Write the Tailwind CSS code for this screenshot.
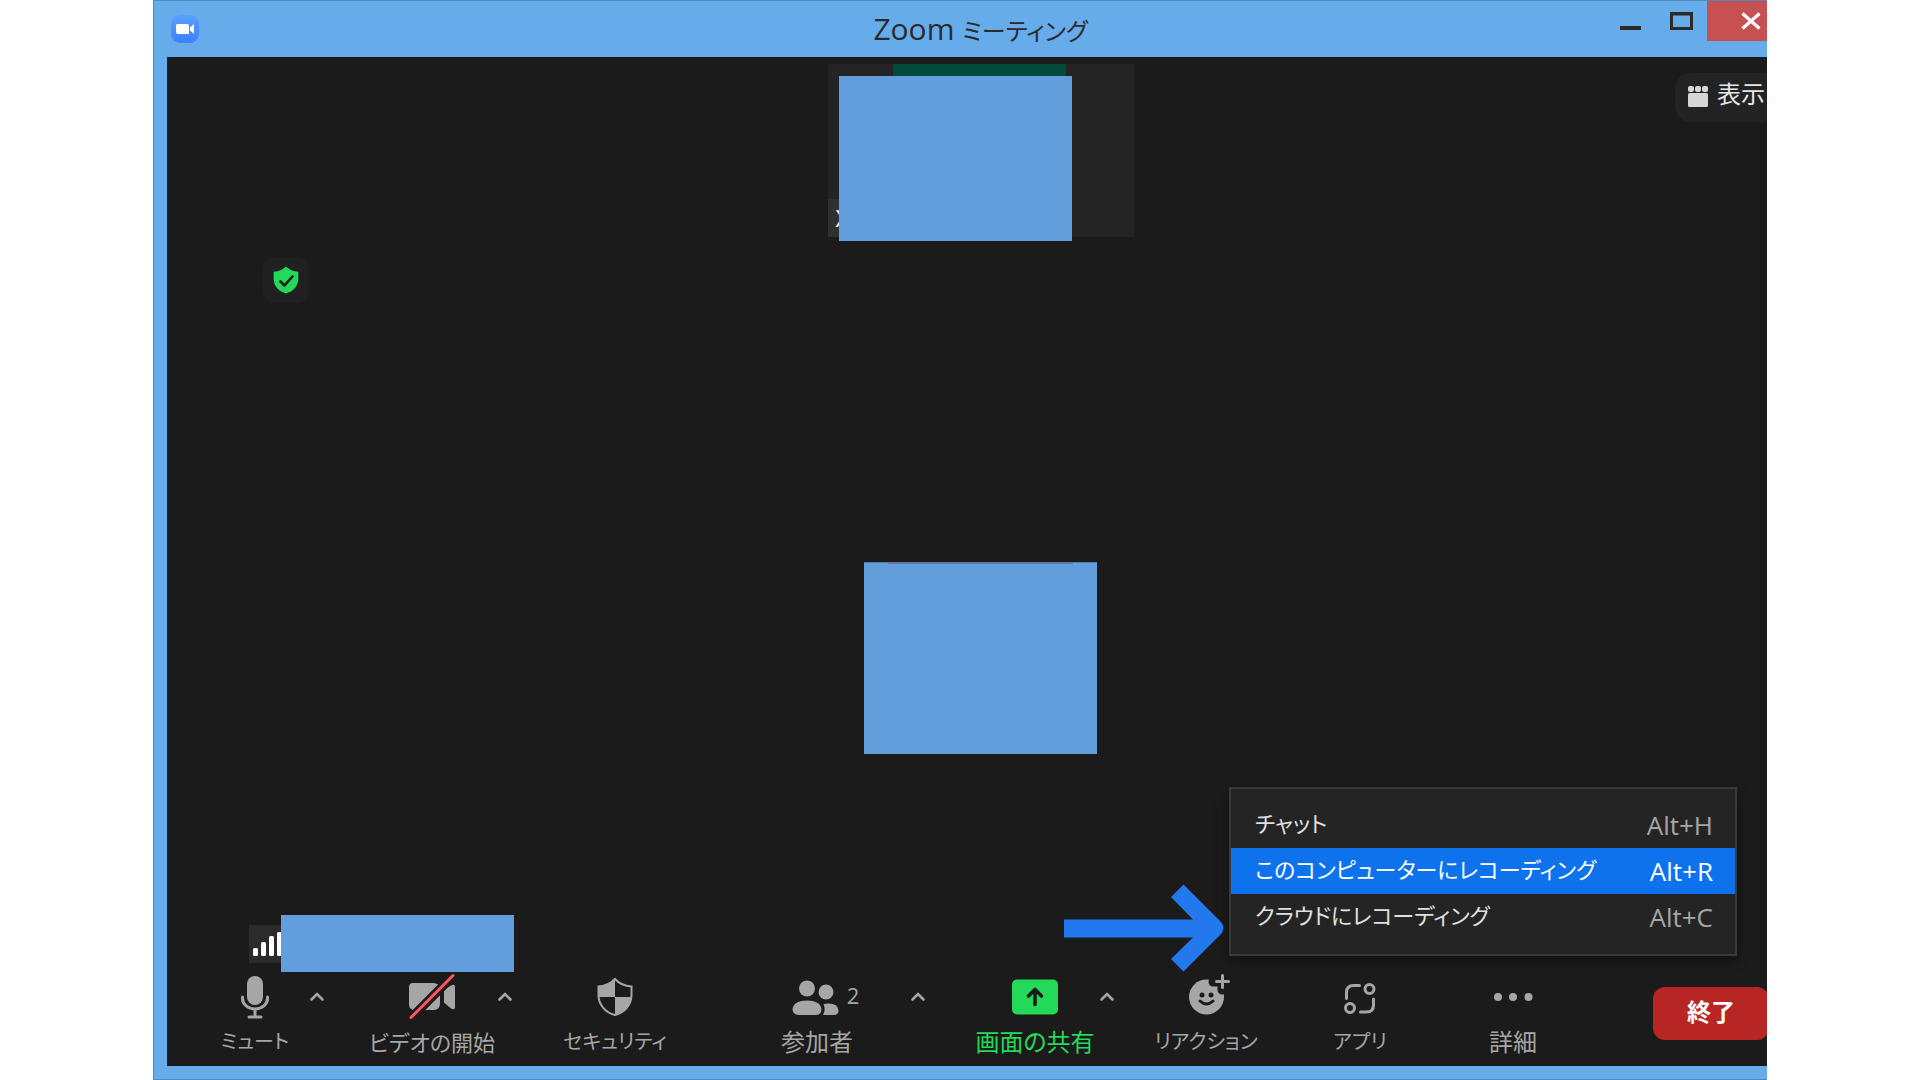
<!DOCTYPE html>
<html lang="ja">
<head>
<meta charset="utf-8">
<title>Zoom ミーティング</title>
<script src="https://cdn.jsdelivr.net/npm/@tailwindcss/browser@4"></script>
</head>
<body class="bg-white font-['Open_Sans','Noto_Sans_CJK_JP',sans-serif] [font-feature-settings:'palt']">
<div class="min-h-screen flex px-[153px]">
<div class="flex-1 flex overflow-hidden">
<div class="w-[calc(100%+40px)] shrink-0 flex flex-col bg-[#67acea] border-l border-t border-b border-[#5089c0]">

  <header class="h-14 grid grid-cols-[1fr_auto_1fr] items-center px-[13px]">
    <svg class="w-7 h-7 ml-1" viewBox="0 0 28 28" aria-hidden="true">
      <defs><linearGradient id="lg" x1="0" y1="0" x2="0" y2="1"><stop offset="0" stop-color="#5a9fff"/><stop offset="1" stop-color="#3b82fb"/></linearGradient></defs>
      <rect width="28" height="28" rx="9" fill="url(#lg)"/>
      <path d="M6 9h10q2 0 2 2v8H7q-2 0-2-2v-7zM19 12.500l4-3.500v10l-4-3.500z" fill="#fff"/>
    </svg>
    <h1 class="text-3xl leading-10 text-[#2b2b2b] whitespace-nowrap">Zoom <span class="text-2xl">ミーティング</span></h1>
    <div class="flex justify-end self-start">
      <button class="w-[52px] h-10 grid place-items-center" aria-label="最小化"><svg class="w-6 h-8" viewBox="0 0 24 32"><rect x="1" y="21" width="21" height="4" fill="#2b2b2b"/></svg></button>
      <button class="w-[50px] h-10 grid place-items-center" aria-label="最大化"><svg class="w-6 h-8" viewBox="0 0 24 32"><path d="M0 7h23v18H0zM3 10.500v11.500h17v-11.500z" fill="#2b2b2b" fill-rule="evenodd"/></svg></button>
      <button class="w-[87px] h-10 bg-[#c75050] grid place-items-center" aria-label="閉じる"><svg class="w-5 h-5" viewBox="0 0 20 20"><path d="M1.500 2.500l17 15M18.500 2.500l-17 15" stroke="#fff" stroke-width="3.200"/></svg></button>
    </div>
  </header>

  <main class="relative flex-1 flex flex-col mx-[13px] mb-[13px] bg-[#1b1b1b]">
    <section class="relative flex justify-center pt-[7px]">
      <div class="relative w-[306px] h-[173px] bg-[#242424]">
        <div class="mx-auto w-[173px] h-3 bg-[#014a3c] -translate-x-px"></div>
        <span class="absolute left-0 bottom-0 w-12 h-[38px] bg-[#303030] pl-2 text-2xl leading-[38px] text-white">X</span>
        <div class="absolute left-[11px] top-3 w-[233px] h-[165px] bg-[#619edb]"></div>
      </div>
      <button class="absolute left-[1508px] top-4 w-[140px] h-[49px] rounded-2xl bg-[#232323] flex items-center gap-2 pl-3 pb-1 text-2xl text-[#e6e6e6]">
        <svg class="w-[22px] h-[22px]" viewBox="0 0 22 22" fill="#d6d6d6" aria-hidden="true"><rect x="1" y="1" width="6" height="6" rx="2"/><rect x="8" y="1" width="6" height="6" rx="2"/><rect x="15" y="1" width="6" height="6" rx="2"/><rect x="1" y="8" width="20" height="14" rx="1.500"/></svg>
        <span class="-mt-1">表示</span>
      </button>
    </section>

    <section class="relative flex-1 flex flex-col pt-5">
      <button class="ml-24 w-[46px] h-[46px] rounded-xl bg-[#202020] grid place-items-center" aria-label="暗号化">
        <svg class="w-[26px] h-[28px]" viewBox="0 0 26 28"><path d="M13 .500C16 3.500 20 5.500 25.300 5.800V13C25.300 20 20 25.500 13 27.500 6 25.500.700 20 .700 13V5.800C6 5.500 10 3.500 13 .500z" fill="#23d959"/><path d="M7.500 15.500l4 4 8-9" fill="none" stroke="#1b1b1b" stroke-width="2.600" stroke-linecap="round" stroke-linejoin="round"/></svg>
      </button>
      <div class="flex-1 flex items-center justify-center pt-10">
        <div class="w-[233px] h-[192px] bg-[#619edb] border-t border-[#4b7fae]">
          <div class="mx-auto w-[185px] h-px bg-[#7a6a94]"></div>
        </div>
      </div>
      <div class="absolute left-[82px] bottom-0 flex items-center">
        <div class="w-8 h-[38px] bg-[#2b2b2b] overflow-hidden">
          <svg class="w-9 h-[38px]" viewBox="0 0 36 38" fill="#fff" aria-hidden="true"><rect x="4" y="23" width="5" height="8" rx="1.500"/><rect x="12" y="17" width="5" height="14" rx="1.500"/><rect x="20" y="11" width="5" height="20" rx="1.500"/><rect x="28" y="7" width="5" height="24" rx="1.500"/></svg>
        </div>
        <div class="w-[233px] h-[57px] bg-[#619edb]"></div>
      </div>
    </section>

    <nav class="flex h-[94px] pl-[38px] text-xl leading-8 text-[#a6a6a6] whitespace-nowrap" aria-label="ミーティング コントロール">
      <button class="w-[100px] flex flex-col items-center gap-1">
        <svg class="w-12 h-[50px]" viewBox="0 0 48 50"><rect x="16" y="4" width="16" height="29" rx="8" fill="#a6a6a6"/><path d="M11.500 25v1.500a12.500 10.500 0 0 0 25 0V25M24 37v8M18 45h12" fill="none" stroke="#a6a6a6" stroke-width="3" stroke-linecap="round"/></svg>
        ミュート
      </button>
      <button class="w-6 h-[50px] grid place-items-center" aria-label="オーディオ設定"><svg class="w-4 h-4" viewBox="0 0 16 16"><path d="M2.500 10.500L8 5l5.500 5.500" fill="none" stroke="#a6a6a6" stroke-width="2.600" stroke-linecap="round"/></svg></button>

      <button class="ml-[42px] w-[122px] flex flex-col items-center gap-1 text-[22px]">
        <svg class="w-12 h-[50px]" viewBox="0 0 48 50"><path d="M5 11h20q7 0 7 6v14q0 7-6 7H7q-6 0-6-6V15q0-4 4-4zM36 17.500l7-4q4-2 4 1v21q0 3-4 1l-7-6z" fill="#a6a6a6"/><path d="M3 46L45 4" stroke="#1b1b1b" stroke-width="9"/><path d="M3 45.500L45 3.500" stroke="#ff5757" stroke-width="3" stroke-linecap="round"/></svg>
        ビデオの開始
      </button>
      <button class="w-6 h-[50px] grid place-items-center" aria-label="ビデオ設定"><svg class="w-4 h-4" viewBox="0 0 16 16"><path d="M2.500 10.500L8 5l5.500 5.500" fill="none" stroke="#a6a6a6" stroke-width="2.600" stroke-linecap="round"/></svg></button>

      <button class="ml-[38px] w-[120px] flex flex-col items-center gap-1">
        <svg class="w-12 h-[50px]" viewBox="0 0 48 50"><path d="M24 7C28 11.500 34 14 40.500 14.500V23C40.500 32.500 34 40.500 24 43 14 40.500 7.500 32.500 7.500 23V14.500C14 14 20 11.500 24 7z" fill="none" stroke="#a6a6a6" stroke-width="2"/><path d="M24 7v18H7.500V14.500C14 14 20 11.500 24 7zM24 25h16.500C40 33 34 40.500 24 43z" fill="#a6a6a6"/></svg>
        セキュリティ
      </button>

      <button class="ml-[82px] w-[120px] flex flex-col items-center gap-1 text-2xl leading-8">
        <span class="flex items-center gap-2 pl-4"><svg class="w-12 h-[50px]" viewBox="0 0 48 50" fill="#a6a6a6"><circle cx="16" cy="16.500" r="8"/><circle cx="35" cy="20" r="7.500"/><path d="M9 43q-7.500 0-7.500-6Q3 28.500 16 28.500T30.500 37q0 6-6 6zM32 43q3-5 .500-11Q47 30 47.500 38.500q0 4.500-5 4.500z"/></svg><span class="text-[22px] -mt-1 font-medium">2</span></span>
        参加者
      </button>
      <button class="ml-[29px] w-6 h-[50px] grid place-items-center" aria-label="参加者オプション"><svg class="w-4 h-4" viewBox="0 0 16 16"><path d="M2.500 10.500L8 5l5.500 5.500" fill="none" stroke="#a6a6a6" stroke-width="2.600" stroke-linecap="round"/></svg></button>

      <button class="ml-[45px] w-[120px] flex flex-col items-center gap-1 text-2xl leading-8 text-[#23d959]">
        <svg class="w-12 h-[50px]" viewBox="0 0 48 50"><rect x="1" y="7.500" width="46" height="35" rx="5" fill="#23d959"/><path d="M24 32.500V18M17.500 24L24 17.500 30.500 24" fill="none" stroke="#1b1b1b" stroke-width="3.600" stroke-linecap="round" stroke-linejoin="round"/></svg>
        画面の共有
      </button>
      <button class="w-6 h-[50px] grid place-items-center" aria-label="共有オプション"><svg class="w-4 h-4" viewBox="0 0 16 16"><path d="M2.500 10.500L8 5l5.500 5.500" fill="none" stroke="#a6a6a6" stroke-width="2.600" stroke-linecap="round"/></svg></button>

      <button class="ml-[30px] w-[114px] flex flex-col items-center gap-1">
        <svg class="w-12 h-[50px]" viewBox="0 0 48 50"><circle cx="24.500" cy="25" r="17.500" fill="#a6a6a6"/><path d="M40 2v16M31 10h16" stroke="#1b1b1b" stroke-width="9" stroke-linecap="round"/><path d="M40.500 3.500v12M34.500 9.500h12" stroke="#a6a6a6" stroke-width="3" stroke-linecap="round"/><circle cx="20" cy="23" r="2.500" fill="#1b1b1b"/><circle cx="29" cy="23" r="2.500" fill="#1b1b1b"/><path d="M18 29q6.500 6 13 0" fill="none" stroke="#1b1b1b" stroke-width="3" stroke-linecap="round"/></svg>
        リアクション
      </button>

      <button class="ml-[47px] w-[100px] flex flex-col items-center gap-1">
        <svg class="w-12 h-[50px]" viewBox="0 0 48 50" fill="none" stroke="#a6a6a6" stroke-width="3" stroke-linecap="round"><path d="M10.500 26.500v-6q0-7 7-7h6M37.500 27v6q0 7-7 7h-6"/><circle cx="33.500" cy="17" r="4.500"/><circle cx="14" cy="36" r="4.500"/></svg>
        アプリ
      </button>

      <button class="ml-[53px] w-[100px] flex flex-col items-center gap-1 text-2xl leading-8">
        <svg class="w-12 h-[50px]" viewBox="0 0 48 50" fill="#a6a6a6"><circle cx="9" cy="25" r="4"/><circle cx="24" cy="25" r="4"/><circle cx="39.500" cy="25" r="4"/></svg>
        詳細
      </button>

      <button class="ml-[90px] mt-[15px] pb-1 w-[116px] h-[53px] rounded-xl bg-[#b72625] text-white text-2xl font-bold">終了</button>
    </nav>

    <ul class="absolute right-[57px] bottom-[110px] w-[508px] border-2 border-[#3a3a3a] bg-[#242424] shadow-[0_4px_12px_rgba(0,0,0,0.4)] pt-[13px] pb-3.5 mt-px text-[22px] text-[#e0e0e0]" role="menu">
      <li><button class="w-full h-[46px] pl-6 pr-[22px] flex items-center justify-between" role="menuitem"><span class="pb-1">チャット</span><span class="text-[26px] text-[#a6a6a6]">Alt+H</span></button></li>
      <li><button class="w-full h-[46px] pl-6 pr-[22px] flex items-center justify-between bg-[#0e72ed] text-white" role="menuitem"><span class="pb-1">このコンピューターにレコーディング</span><span class="text-[26px]">Alt+R</span></button></li>
      <li><button class="w-full h-[46px] pl-6 pr-[22px] flex items-center justify-between" role="menuitem"><span class="pb-1">クラウドにレコーディング</span><span class="text-[26px] text-[#a6a6a6]">Alt+C</span></button></li>
    </ul>

    <svg class="absolute left-[897px] bottom-[94px] w-[160px] h-[88px]" viewBox="0 0 160 88" aria-hidden="true"><path d="M0 35.500H129L107 13 119.500.500 156 37Q163 44 156 51L119.500 87.500 107 75 129 53.500H0z" fill="#2378ee"/></svg>
  </main>
</div>
</div>
</div>
</body>
</html>
